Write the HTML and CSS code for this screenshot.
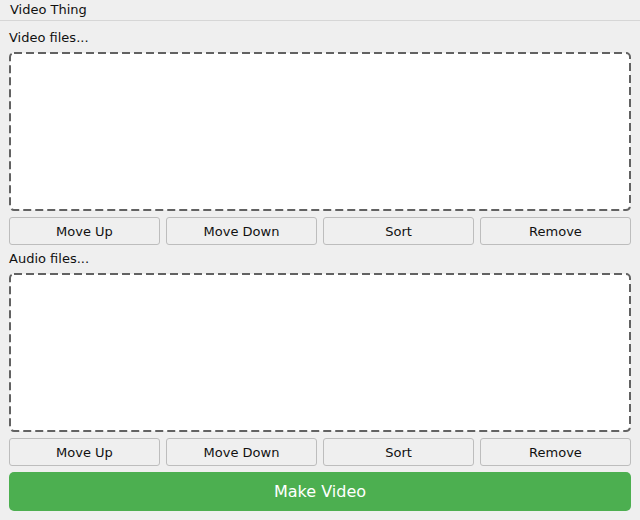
FILE: index.html
```html
<!DOCTYPE html>
<html>
<head>
<meta charset="utf-8">
<link rel="stylesheet" href="styles.css">
</head>
<body>
<div class="titlebar">Video Thing</div>
<div class="main">
  <div class="label">Video files...</div>
  <div class="dropzone">
    <svg class="dash" width="622" height="159" viewBox="0 0 622 159"><rect x="1" y="1" width="620" height="157" rx="4" ry="4" fill="#fff" stroke="#626262" stroke-width="2" stroke-dasharray="8 4"/></svg>
  </div>
  <div class="btnrow">
    <button class="btn">Move Up</button>
    <button class="btn">Move Down</button>
    <button class="btn">Sort</button>
    <button class="btn">Remove</button>
  </div>
  <div class="label">Audio files...</div>
  <div class="dropzone">
    <svg class="dash" width="622" height="159" viewBox="0 0 622 159"><rect x="1" y="1" width="620" height="157" rx="4" ry="4" fill="#fff" stroke="#626262" stroke-width="2" stroke-dasharray="8 4"/></svg>
  </div>
  <div class="btnrow">
    <button class="btn">Move Up</button>
    <button class="btn">Move Down</button>
    <button class="btn">Sort</button>
    <button class="btn">Remove</button>
  </div>
  <button class="make">Make Video</button>
</div>
</body>
</html>
```
FILE: styles.css
```css
html, body {
  margin: 0;
  padding: 0;
  background: #efefef;
  font-family: "DejaVu Sans", sans-serif;
  font-size: 13px;
  color: #111;
  width: 640px;
  height: 520px;
  overflow: hidden;
}
.titlebar {
  height: 20px;
  line-height: 20px;
  padding-left: 10px;
  border-bottom: 1px solid #d6d6d6;
}
.main {
  display: flex;
  flex-direction: column;
  gap: 6px;
  padding: 9px;
}
.label {
  height: 16px;
  line-height: 16px;
}
.dropzone {
  height: 159px;
}
.dash {
  display: block;
}
.btnrow {
  display: grid;
  grid-template-columns: repeat(4, 1fr);
  gap: 6px;
}
.btn {
  height: 28px;
  margin: 0;
  background: #efefef;
  border: 1px solid #bdbdbd;
  border-radius: 3px;
  font-family: "DejaVu Sans", sans-serif;
  font-size: 13px;
  color: #111;
  padding: 0;
}
.make {
  height: 39px;
  margin: 0;
  background: #4caf50;
  border: none;
  border-radius: 5px;
  color: #fff;
  font-family: "DejaVu Sans", sans-serif;
  font-size: 16px;
  padding: 0;
}
```
